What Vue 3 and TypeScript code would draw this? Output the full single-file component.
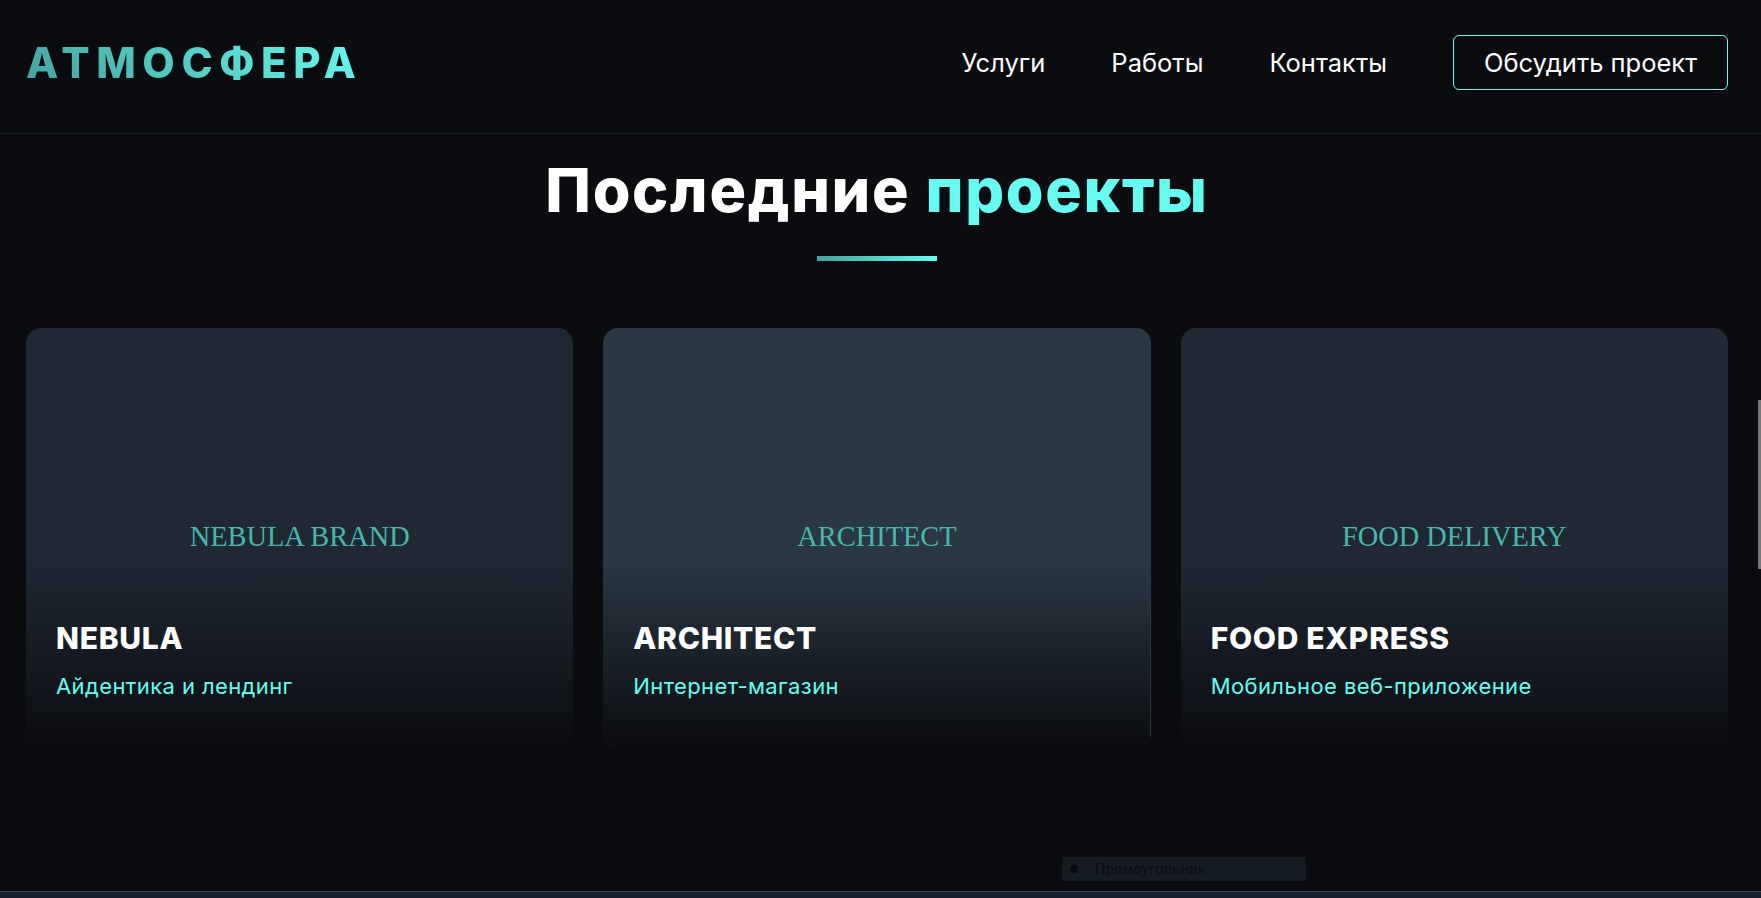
<template>
  <div class="page">
    <header class="site-header">
      <div class="logo">АТМОСФЕРА</div>
      <nav class="nav">
        <a v-for="link in links" :key="link" class="nav-link">{{ link }}</a>
        <button class="cta">Обсудить проект</button>
      </nav>
    </header>

    <main class="portfolio">
      <h2 class="section-title">Последние <span>проекты</span></h2>
      <div class="title-line"></div>

      <div class="grid">
        <article v-for="p in projects" :key="p.title" class="card" :class="{ alt: p.alt }">
          <div class="card-label">{{ p.label }}</div>
          <div class="overlay">
            <h3>{{ p.title }}</h3>
            <p>{{ p.sub }}</p>
          </div>
        </article>
      </div>
    </main>

    <div class="ghost-tip">
      <i class="ghost-dot"></i>
      <span>Прямоугольник</span>
    </div>
    <div class="taskbar"></div>
    <div class="scroll-thumb"></div>
  </div>
</template>

<script setup lang="ts">
const links = ['Услуги', 'Работы', 'Контакты'];

const projects = [
  { label: 'NEBULA BRAND', title: 'NEBULA', sub: 'Айдентика и лендинг', alt: false },
  { label: 'ARCHITECT', title: 'ARCHITECT', sub: 'Интернет-магазин', alt: true },
  { label: 'FOOD DELIVERY', title: 'FOOD EXPRESS', sub: 'Мобильное веб-приложение', alt: false },
];
</script>

<style>
html,
body {
  margin: 0;
  background: #0b0c10;
  overflow: hidden;
}
</style>

<style scoped>
.page {
  position: relative;
  height: 898px;
  overflow: hidden;
  background: #0b0c10;
  color: #fff;
  font-family: Inter, "Noto Sans", sans-serif;
}

.site-header {
  height: 133px;
  padding: 0 33px 0 26px;
  display: flex;
  align-items: center;
  justify-content: space-between;
  border-bottom: 1px solid rgba(102, 252, 241, 0.1);
}

.logo {
  margin-bottom: 8px;
  font-size: 42px;
  font-weight: 800;
  letter-spacing: 6.6px;
  background: linear-gradient(45deg, #45a29e, #66fcf1);
  -webkit-background-clip: text;
  background-clip: text;
  color: transparent;
}

.nav {
  display: flex;
  align-items: center;
  gap: 66px;
  margin-bottom: 8px;
}

.nav-link {
  font-size: 25.5px;
  color: #fff;
}

.cta {
  width: 275px;
  height: 55px;
  border: 1px solid #66fcf1;
  border-radius: 6px;
  background: transparent;
  color: #fff;
  font: inherit;
  font-size: 25.5px;
}

.portfolio {
  padding: 0 33px 0 26px;
}

.section-title {
  margin: 18px 0 0;
  text-align: center;
  font-size: 61px;
  line-height: 76px;
  font-weight: 800;
  letter-spacing: 1.7px;
}

.section-title span {
  color: #66fcf1;
}

.title-line {
  width: 120px;
  height: 5px;
  margin: 28px auto 67px;
  background: linear-gradient(90deg, #45a29e, #66fcf1);
}

.grid {
  display: grid;
  grid-template-columns: repeat(3, 1fr);
  gap: 30px;
}

.card {
  position: relative;
  height: 420px;
  border-radius: 15px;
  overflow: hidden;
  background: #1f2833;
  display: flex;
  align-items: center;
  justify-content: center;
}

.card.alt {
  background: #2a3843;
}

.card-label {
  margin-bottom: 2px;
  font-family: "Liberation Serif", serif;
  font-size: 28.4px;
  color: #48b6ae;
}

.overlay {
  position: absolute;
  left: 0;
  right: 0;
  bottom: 0;
  padding: 30px;
  height: 190px;
  box-sizing: border-box;
  display: flex;
  flex-direction: column;
  justify-content: flex-end;
  background: linear-gradient(to top, #0b0c10, rgba(11, 12, 16, 0));
}

/* the card's own colour shows along its right edge */
.card.alt .overlay {
  right: 1px;
}

.overlay h3 {
  margin: 0 0 17px;
  font-size: 30px;
  line-height: 36px;
  font-weight: 800;
  letter-spacing: 0.7px;
}

.overlay p {
  margin: 0 0 19px;
  font-size: 22px;
  line-height: 26px;
  letter-spacing: 0.4px;
  color: #66fcf1;
}

/* leftovers of the desktop around the browser */
.ghost-tip {
  position: absolute;
  left: 1062px;
  top: 857px;
  width: 244px;
  height: 24px;
  display: flex;
  align-items: center;
  background: #141b22;
  font-family: Roboto, sans-serif;
  font-size: 15px;
  color: #0b0c10;
}

.ghost-dot {
  width: 8px;
  height: 8px;
  margin: 0 17px 0 8px;
  border-radius: 50%;
  background: #0b0c10;
}

.taskbar {
  position: absolute;
  left: 0;
  right: 0;
  bottom: 0;
  height: 7px;
  background: #182032;
  border-top: 1px solid #3a4556;
  box-sizing: border-box;
}

.scroll-thumb {
  position: absolute;
  right: 0;
  top: 400px;
  width: 3px;
  height: 169px;
  background: #777;
}
</style>
